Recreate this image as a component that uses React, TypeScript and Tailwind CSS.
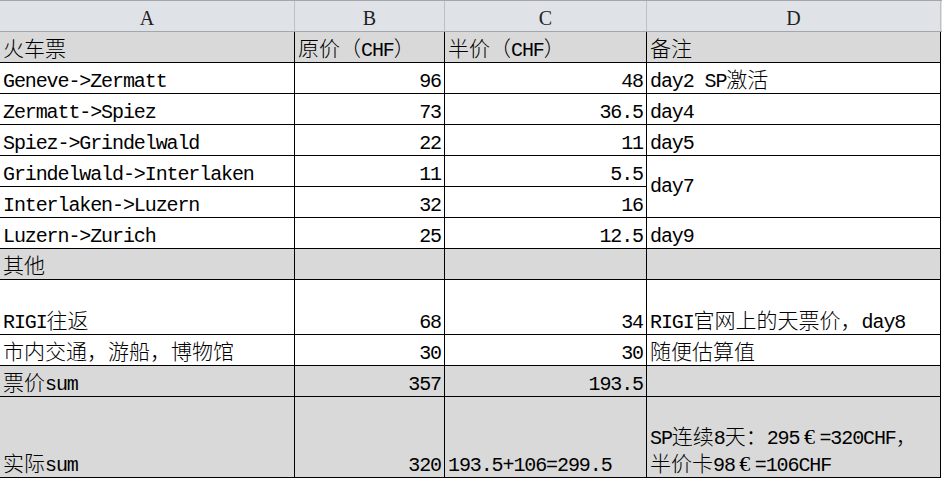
import React from 'react';

type Cell = {
    t?: string;
    right?: boolean;
    span?: boolean;
    gray?: boolean;
};

const CJK = /([\u3000-\u9fff\uff00-\uffef]+|\u20ac)/;

// Latin runs use the mono stack (half width), CJK runs get a wider size
const Txt = ({ s }: { s: string }) => (
    <>
        {s.split(CJK).map((part, i) => {
            if (i % 2 === 0) return <React.Fragment key={i}>{part}</React.Fragment>;
            if (part === '€')
                return (
                    <span key={i} className="inline-block w-[20px] text-center font-['Liberation_Serif',serif] text-[22px] tracking-normal leading-none">
                        €
                    </span>
                );
            return (
                <span key={i} className="inline-block font-['Noto_Sans_CJK_SC',sans-serif] font-light text-[21px] tracking-normal leading-none">
                    {part}
                </span>
            );
        })}
    </>
);

const rows: Cell[][] = [
    [{ t: '火车票' }, { t: '原价（CHF）' }, { t: '半价（CHF）' }, { t: '备注' }].map(c => ({ ...c, gray: true })),
    [{ t: 'Geneve->Zermatt' }, { t: '96', right: true }, { t: '48', right: true }, { t: 'day2 SP激活' }],
    [{ t: 'Zermatt->Spiez' }, { t: '73', right: true }, { t: '36.5', right: true }, { t: 'day4' }],
    [{ t: 'Spiez->Grindelwald' }, { t: '22', right: true }, { t: '11', right: true }, { t: 'day5' }],
    [{ t: 'Grindelwald->Interlaken' }, { t: '11', right: true }, { t: '5.5', right: true }, { t: 'day7', span: true }],
    [{ t: 'Interlaken->Luzern' }, { t: '32', right: true }, { t: '16', right: true }],
    [{ t: 'Luzern->Zurich' }, { t: '25', right: true }, { t: '12.5', right: true }, { t: 'day9' }],
    [{ t: '其他' }, {}, {}, {}].map(c => ({ ...c, gray: true })),
    [{ t: 'RIGI往返' }, { t: '68', right: true }, { t: '34', right: true }, { t: 'RIGI官网上的天票价，day8' }],
    [{ t: '市内交通，游船，博物馆' }, { t: '30', right: true }, { t: '30', right: true }, { t: '随便估算值' }],
    [{ t: '票价sum' }, { t: '357', right: true }, { t: '193.5', right: true }, {}].map(c => ({ ...c, gray: true })),
    [{ t: '实际sum' }, { t: '320', right: true }, { t: '193.5+106=299.5' }, { t: 'SP连续8天：295€=320CHF，\n半价卡98€=106CHF' }].map(c => ({ ...c, gray: true })),
];

const cols = [
    { label: 'A', w: 'w-[295px]' },
    { label: 'B', w: 'w-[150px]' },
    { label: 'C', w: 'w-[202px]' },
    { label: 'D', w: 'w-[294px]' },
];

const App = () => {
    return (
        <div className="w-[942px] h-[479px] bg-white overflow-hidden text-black">
            <div className="flex h-[32px] border-t border-b border-[#a3a6aa] bg-[#dfe3e8]">
                {cols.map(c => (
                    <div
                        key={c.label}
                        className={`${c.w} flex items-center justify-center pt-[4px] border-r border-[#bdbfc2] font-['Liberation_Serif',serif] text-[20px] text-[#222]`}
                    >
                        {c.label}
                    </div>
                ))}
            </div>

            <div className="grid grid-cols-[295px_150px_202px_294px] grid-rows-[repeat(8,31px)_55px_31px_31px_81px] font-['Liberation_Mono','Noto_Sans_CJK_SC',monospace] text-[20px] tracking-[-1.1px]">
                {rows.flat().map((c, i) => (
                    <div
                        key={i}
                        className={`flex border-r border-b border-black px-[3px] leading-[23px] ${
                            c.span ? 'row-span-2 items-center' : 'items-end'
                        } ${c.right ? 'justify-end' : 'justify-start'} ${c.gray ? 'bg-[#d9d9d9]' : 'bg-white'}`}
                    >
                        {c.t && (
                            <div className="flex flex-col gap-[2px] whitespace-nowrap">
                                {c.t.split('\n').map((line, j) => (
                                    <div key={j}>
                                        <Txt s={line} />
                                    </div>
                                ))}
                            </div>
                        )}
                    </div>
                ))}
            </div>
        </div>
    );
};

export default App;
